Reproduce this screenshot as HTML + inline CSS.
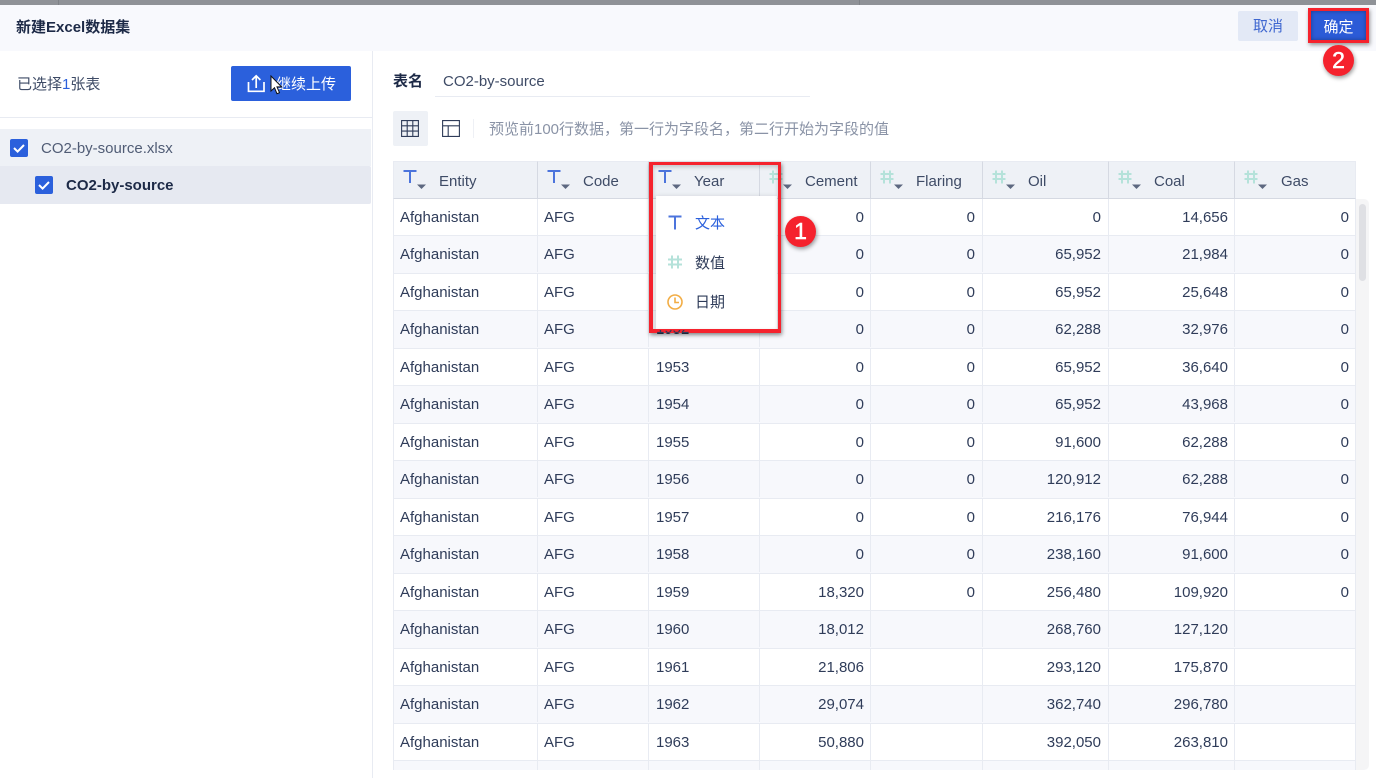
<!DOCTYPE html>
<html><head><meta charset="utf-8"><style>
*{box-sizing:border-box}
html,body{margin:0;padding:0;width:1376px;height:778px;overflow:hidden;background:#fff;font-family:"Liberation Sans","Noto Sans CJK SC",sans-serif;color:#2f3c59;font-size:15px}
.a{position:absolute}
.t{position:absolute;white-space:nowrap;line-height:20px}
.rw{position:absolute;left:393px;width:963px;height:37.5px;border-bottom:1px solid #e8ebf2;border-left:1px solid #e8ebf2;border-right:1px solid #e8ebf2}
.rw.s{background:#f7f8fc}
.c{position:absolute;top:0;height:36px;line-height:38px;border-right:1px solid #e8ebf2;white-space:nowrap}
.c.n{text-align:right;padding-right:7px}
.c4.n,.c7.n{padding-right:6px}
.c.l{padding-left:6px}
.c3.l{padding-left:7px}
.c1{left:0;width:144px}.c2{left:144px;width:111px}.c3{left:255px;width:111px}.c4{left:366px;width:111px}.c5{left:477px;width:112px}.c6{left:589px;width:126px}.c7{left:715px;width:126px}.c8{left:841px;width:121px;border-right:0}
.hd{position:absolute;top:161px;height:37.5px;background:#eef1f6;border-top:1px solid #e8ebf2;border-bottom:1px solid #d5d9e2;border-right:1px solid #d5d9e2;color:#3e4b66}
.hd span{position:absolute;top:10px;line-height:20px}
.hd svg{position:absolute;left:8px;top:6px}
</style></head><body>
<div class="a" style="left:0;top:0;width:1376px;height:5px;background:#8f9297"></div>
<div class="a" style="left:58px;top:0;width:1px;height:5px;background:#7f8287"></div>
<div class="a" style="left:859px;top:0;width:1px;height:5px;background:#7f8287"></div>
<div class="a" style="left:0;top:5px;width:1376px;height:46px;background:#f8f9fd"></div>
<div class="t" style="left:16px;top:18px;font-weight:700;color:#1d2a47">新建Excel数据集</div>
<div class="a" style="left:1238px;top:11px;width:60px;height:30px;background:#e3e9f6;border-radius:2px;color:#3f67d0;text-align:center;line-height:32px">取消</div>
<div class="a" style="left:372px;top:51px;width:1px;height:727px;background:#e8ebf2"></div>
<div class="t" style="left:17px;top:75px;color:#3e4b66">已选择<span style="color:#2b60dc">1</span>张表</div>
<div class="a" style="left:231px;top:66px;width:120px;height:35px;background:#2b60dc;border-radius:2px"></div>
<svg class="a" style="left:247px;top:74px" width="19" height="19" viewBox="0 0 19 19" fill="none" stroke="#fff" stroke-width="1.7"><path d="M1.5 8v9.3h15.5V8M9.2 14V2M5 6l4.2-4.2L13.4 6"/></svg>
<div class="t" style="left:276px;top:75px;color:#fff">继续上传</div>
<svg class="a" style="left:270px;top:75px" width="13" height="20" viewBox="0 0 13 20"><path d="M1 1v15l3.5-3.3 2.5 6 2.5-1-2.5-5.8h4.6z" fill="#fff" stroke="#111" stroke-width="1"/></svg>
<div class="a" style="left:0;top:117px;width:372px;height:1px;background:#e8ebf2"></div>
<div class="a" style="left:0;top:129px;width:371px;height:37px;background:#eef1f6"></div>
<div class="a" style="left:0;top:166px;width:371px;height:38px;background:#e6e9f1;border-radius:0 2px 2px 0"></div>
<svg class="a" style="left:10px;top:139px" width="18" height="18" viewBox="0 0 18 18"><rect width="18" height="18" rx="2" fill="#2b60dc"/><path d="M4 9l3.6 3.6L14 6" fill="none" stroke="#fff" stroke-width="2"/></svg>
<div class="t" style="left:41px;top:139px;color:#505c75">CO2-by-source.xlsx</div>
<svg class="a" style="left:35px;top:176px" width="18" height="18" viewBox="0 0 18 18"><rect width="18" height="18" rx="2" fill="#2b60dc"/><path d="M4 9l3.6 3.6L14 6" fill="none" stroke="#fff" stroke-width="2"/></svg>
<div class="t" style="left:66px;top:176px;font-weight:700;color:#1d2a47">CO2-by-source</div>

<div class="t" style="left:393px;top:72px;font-weight:700;color:#1d2a47">表名</div>
<div class="t" style="left:443px;top:72px;color:#3e4b66">CO2-by-source</div>
<div class="a" style="left:435px;top:96px;width:375px;height:1px;background:#e8ebf2"></div>
<div class="a" style="left:393px;top:111px;width:35px;height:35px;background:#eef1f6;border-radius:2px"></div>
<svg class="a" style="left:401px;top:120px" width="18" height="17" viewBox="0 0 18 17" fill="none" stroke="#2f3c59" stroke-width="1.1"><path d="M.6.6h16.8v15.8H.6zM.6 5.8h16.8M.6 11.1h16.8M6.2.6v15.8M11.8.6v15.8"/></svg>
<svg class="a" style="left:442px;top:120px" width="18" height="17" viewBox="0 0 18 17" fill="none" stroke="#2f3c59" stroke-width="1.1"><path d="M.6.6h16.8v15.8H.6zM.6 5.8h16.8M6.2 5.8v10.6"/></svg>
<div class="a" style="left:473px;top:119px;width:1px;height:19px;background:#eef0f5"></div>
<div class="t" style="left:489px;top:120px;color:#8a93a6">预览前100行数据，第一行为字段名，第二行开始为字段的值</div>

<div class="hd" style="left:393px;width:145px;border-left:1px solid #e8ebf2"><svg width="24" height="24" viewBox="0 0 24 24"><path d="M1.500 3h13M8 3v12" stroke="#4c74dc" stroke-width="2" fill="none"/><path d="M15 16.500h9l-4.500 4.500z" fill="#5d6880"/></svg><span style="left:45px">Entity</span></div>
<div class="hd" style="left:538px;width:111px"><svg width="24" height="24" viewBox="0 0 24 24"><path d="M1.500 3h13M8 3v12" stroke="#4c74dc" stroke-width="2" fill="none"/><path d="M15 16.500h9l-4.500 4.500z" fill="#5d6880"/></svg><span style="left:45px">Code</span></div>
<div class="hd" style="left:649px;width:111px"><svg width="24" height="24" viewBox="0 0 24 24"><path d="M1.500 3h13M8 3v12" stroke="#4c74dc" stroke-width="2" fill="none"/><path d="M15 16.500h9l-4.500 4.500z" fill="#5d6880"/></svg><span style="left:45px">Year</span></div>
<div class="hd" style="left:760px;width:111px"><svg width="24" height="24" viewBox="0 0 24 24"><path d="M1.500 6h13M1.500 11h13M5 2.500v13M11 2.500v13" stroke="#b5e2da" stroke-width="2" fill="none"/><path d="M15 16.500h9l-4.500 4.500z" fill="#5d6880"/></svg><span style="left:45px">Cement</span></div>
<div class="hd" style="left:871px;width:112px"><svg width="24" height="24" viewBox="0 0 24 24"><path d="M1.500 6h13M1.500 11h13M5 2.500v13M11 2.500v13" stroke="#b5e2da" stroke-width="2" fill="none"/><path d="M15 16.500h9l-4.500 4.500z" fill="#5d6880"/></svg><span style="left:45px">Flaring</span></div>
<div class="hd" style="left:983px;width:126px"><svg width="24" height="24" viewBox="0 0 24 24"><path d="M1.500 6h13M1.500 11h13M5 2.500v13M11 2.500v13" stroke="#b5e2da" stroke-width="2" fill="none"/><path d="M15 16.500h9l-4.500 4.500z" fill="#5d6880"/></svg><span style="left:45px">Oil</span></div>
<div class="hd" style="left:1109px;width:126px"><svg width="24" height="24" viewBox="0 0 24 24"><path d="M1.500 6h13M1.500 11h13M5 2.500v13M11 2.500v13" stroke="#b5e2da" stroke-width="2" fill="none"/><path d="M15 16.500h9l-4.500 4.500z" fill="#5d6880"/></svg><span style="left:45px">Coal</span></div>
<div class="hd" style="left:1235px;width:121px;border-right:1px solid #e8ebf2"><svg width="24" height="24" viewBox="0 0 24 24"><path d="M1.500 6h13M1.500 11h13M5 2.500v13M11 2.500v13" stroke="#b5e2da" stroke-width="2" fill="none"/><path d="M15 16.500h9l-4.500 4.500z" fill="#5d6880"/></svg><span style="left:46px">Gas</span></div>

<div class="rw" style="top:198.500px"><div class="c c1 l">Afghanistan</div><div class="c c2 l">AFG</div><div class="c c3 l">1949</div><div class="c c4 n">0</div><div class="c c5 n">0</div><div class="c c6 n">0</div><div class="c c7 n">14,656</div><div class="c c8 n">0</div></div>
<div class="rw s" style="top:236px"><div class="c c1 l">Afghanistan</div><div class="c c2 l">AFG</div><div class="c c3 l">1950</div><div class="c c4 n">0</div><div class="c c5 n">0</div><div class="c c6 n">65,952</div><div class="c c7 n">21,984</div><div class="c c8 n">0</div></div>
<div class="rw" style="top:273.500px"><div class="c c1 l">Afghanistan</div><div class="c c2 l">AFG</div><div class="c c3 l">1951</div><div class="c c4 n">0</div><div class="c c5 n">0</div><div class="c c6 n">65,952</div><div class="c c7 n">25,648</div><div class="c c8 n">0</div></div>
<div class="rw s" style="top:311px"><div class="c c1 l">Afghanistan</div><div class="c c2 l">AFG</div><div class="c c3 l">1952</div><div class="c c4 n">0</div><div class="c c5 n">0</div><div class="c c6 n">62,288</div><div class="c c7 n">32,976</div><div class="c c8 n">0</div></div>
<div class="rw" style="top:348.500px"><div class="c c1 l">Afghanistan</div><div class="c c2 l">AFG</div><div class="c c3 l">1953</div><div class="c c4 n">0</div><div class="c c5 n">0</div><div class="c c6 n">65,952</div><div class="c c7 n">36,640</div><div class="c c8 n">0</div></div>
<div class="rw s" style="top:386px"><div class="c c1 l">Afghanistan</div><div class="c c2 l">AFG</div><div class="c c3 l">1954</div><div class="c c4 n">0</div><div class="c c5 n">0</div><div class="c c6 n">65,952</div><div class="c c7 n">43,968</div><div class="c c8 n">0</div></div>
<div class="rw" style="top:423.500px"><div class="c c1 l">Afghanistan</div><div class="c c2 l">AFG</div><div class="c c3 l">1955</div><div class="c c4 n">0</div><div class="c c5 n">0</div><div class="c c6 n">91,600</div><div class="c c7 n">62,288</div><div class="c c8 n">0</div></div>
<div class="rw s" style="top:461px"><div class="c c1 l">Afghanistan</div><div class="c c2 l">AFG</div><div class="c c3 l">1956</div><div class="c c4 n">0</div><div class="c c5 n">0</div><div class="c c6 n">120,912</div><div class="c c7 n">62,288</div><div class="c c8 n">0</div></div>
<div class="rw" style="top:498.500px"><div class="c c1 l">Afghanistan</div><div class="c c2 l">AFG</div><div class="c c3 l">1957</div><div class="c c4 n">0</div><div class="c c5 n">0</div><div class="c c6 n">216,176</div><div class="c c7 n">76,944</div><div class="c c8 n">0</div></div>
<div class="rw s" style="top:536px"><div class="c c1 l">Afghanistan</div><div class="c c2 l">AFG</div><div class="c c3 l">1958</div><div class="c c4 n">0</div><div class="c c5 n">0</div><div class="c c6 n">238,160</div><div class="c c7 n">91,600</div><div class="c c8 n">0</div></div>
<div class="rw" style="top:573.500px"><div class="c c1 l">Afghanistan</div><div class="c c2 l">AFG</div><div class="c c3 l">1959</div><div class="c c4 n">18,320</div><div class="c c5 n">0</div><div class="c c6 n">256,480</div><div class="c c7 n">109,920</div><div class="c c8 n">0</div></div>
<div class="rw s" style="top:611px"><div class="c c1 l">Afghanistan</div><div class="c c2 l">AFG</div><div class="c c3 l">1960</div><div class="c c4 n">18,012</div><div class="c c5 n"></div><div class="c c6 n">268,760</div><div class="c c7 n">127,120</div><div class="c c8 n"></div></div>
<div class="rw" style="top:648.500px"><div class="c c1 l">Afghanistan</div><div class="c c2 l">AFG</div><div class="c c3 l">1961</div><div class="c c4 n">21,806</div><div class="c c5 n"></div><div class="c c6 n">293,120</div><div class="c c7 n">175,870</div><div class="c c8 n"></div></div>
<div class="rw s" style="top:686px"><div class="c c1 l">Afghanistan</div><div class="c c2 l">AFG</div><div class="c c3 l">1962</div><div class="c c4 n">29,074</div><div class="c c5 n"></div><div class="c c6 n">362,740</div><div class="c c7 n">296,780</div><div class="c c8 n"></div></div>
<div class="rw" style="top:723.500px"><div class="c c1 l">Afghanistan</div><div class="c c2 l">AFG</div><div class="c c3 l">1963</div><div class="c c4 n">50,880</div><div class="c c5 n"></div><div class="c c6 n">392,050</div><div class="c c7 n">263,810</div><div class="c c8 n"></div></div>
<div class="a" style="left:393px;top:761px;width:963px;height:9px;background:#f7f8fc;border-left:1px solid #e8ebf2;border-right:1px solid #e8ebf2"><div class="a" style="left:143px;top:0;width:1px;height:9px;background:#e8ebf2"></div><div class="a" style="left:254px;top:0;width:1px;height:9px;background:#e8ebf2"></div><div class="a" style="left:365px;top:0;width:1px;height:9px;background:#e8ebf2"></div><div class="a" style="left:476px;top:0;width:1px;height:9px;background:#e8ebf2"></div><div class="a" style="left:588px;top:0;width:1px;height:9px;background:#e8ebf2"></div><div class="a" style="left:714px;top:0;width:1px;height:9px;background:#e8ebf2"></div><div class="a" style="left:840px;top:0;width:1px;height:9px;background:#e8ebf2"></div></div>

<div class="a" style="left:1356px;top:199px;width:13px;height:571px;background:#f5f5f6;border-radius:0 5px 5px 0"></div>
<div class="a" style="left:1359px;top:204px;width:7px;height:77px;background:#dfe0e4;border-radius:4px"></div>

<div class="a" style="left:656px;top:196px;width:121px;height:134px;background:#fff;box-shadow:0 1px 5px rgba(0,0,0,.18)"></div>
<svg class="a" style="left:666px;top:214px" width="18" height="18" viewBox="0 0 18 18"><path d="M2.500 2.500h13M9 2.500v13" stroke="#4c74dc" stroke-width="2" fill="none"/></svg>
<div class="t" style="left:695px;top:214px;color:#2b60dc">文本</div>
<svg class="a" style="left:666px;top:253px" width="18" height="18" viewBox="0 0 18 18"><path d="M2 6.500h14M2 11.500h14M6 2.500v13M12 2.500v13" stroke="#b5e2da" stroke-width="2" fill="none"/></svg>
<div class="t" style="left:695px;top:254px;color:#2f3c59">数值</div>
<svg class="a" style="left:666px;top:293px" width="18" height="18" viewBox="0 0 18 18" fill="none" stroke="#f2ad45" stroke-width="1.600"><circle cx="9" cy="9" r="7"/><path d="M9 4.500V9.500H13"/></svg>
<div class="t" style="left:695px;top:293px;color:#2f3c59">日期</div>

<div class="a" style="left:649px;top:162px;width:132px;height:171px;border:solid #f5222d;border-width:3px 3px 4px 4px;box-shadow:1px 2px 4px rgba(0,0,0,.45),inset 0 2px 4px rgba(0,0,0,.2)"></div>
<div class="a" style="left:656px;top:330px;width:36px;height:4px;overflow:hidden"><div class="a" style="left:0;top:-13px;line-height:24px;color:#2f3c59">1952</div></div>
<div class="a" style="left:785px;top:216px;width:31px;height:31px;border-radius:50%;background:#f5222d;box-shadow:1px 2px 4px rgba(0,0,0,.4);color:#fff;font-size:23px;-webkit-text-stroke:.5px #fff;line-height:31px;text-align:center">1</div>

<div class="a" style="left:1308px;top:8px;width:61px;height:35px;background:#2b5bd7;border:3px solid #f5222d;color:#fff;text-align:center;line-height:33px;box-shadow:1px 2px 4px rgba(0,0,0,.4),inset 0 0 4px rgba(0,0,0,.35)">确定</div>
<div class="a" style="left:1323px;top:45px;width:31px;height:31px;border-radius:50%;background:#f5222d;box-shadow:1px 2px 4px rgba(0,0,0,.4);color:#fff;font-size:23px;-webkit-text-stroke:.5px #fff;line-height:31px;text-align:center">2</div>
</body></html>
